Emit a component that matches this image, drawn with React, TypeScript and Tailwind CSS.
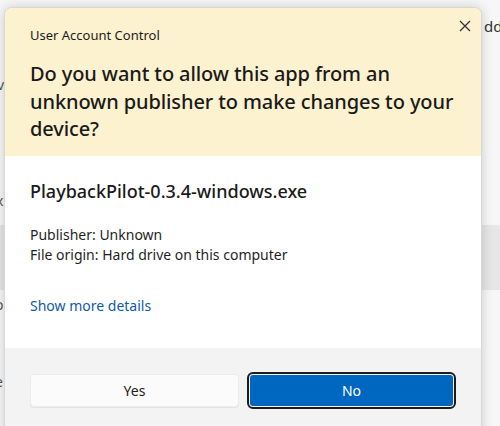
import React from "react";

const font = { fontFamily: '"Noto Sans", "Open Sans", sans-serif' };

export default function App() {
  return (
    <div className="relative w-[500px] h-[426px] overflow-hidden bg-[#f7f7f7]" style={font}>
      {/* background window content */}
      <div className="flex flex-col h-full">
        <div className="h-[225px]"></div>
        <div className="h-[65px] bg-[#e6e6e6]"></div>
        <div className="flex-1"></div>
      </div>
      <div className="absolute left-[484px] top-[15px] text-[15px] text-[#333]">dd</div>
      <div className="absolute left-[-3px] top-[74px] text-[14px] text-[#555]">v</div>
      <div className="absolute left-[-4px] top-[190px] text-[14px] text-[#555]">x</div>
      <div className="absolute left-[-5px] top-[294px] text-[14px] text-[#555]">o</div>
      <div className="absolute left-[-5px] top-[371px] text-[14px] text-[#555]">e</div>

      {/* dialog */}
      <div className="absolute left-[4px] top-[7px] w-[478px] h-[440px] rounded-[8px] overflow-hidden border border-[#d8d8d8] shadow-[0_0_12px_rgba(0,0,0,0.18)] flex flex-col bg-white">
        <div className="relative bg-[#fdf2d0] h-[148px] px-[25px] pt-[18px]">
          <div className="text-[13px] leading-[18px] text-[#1b1b1b]">User Account Control</div>
          <div className="mt-[16px] text-[20px] leading-[27.5px] font-medium text-[#1a1a1a] tracking-[-0.1px]">
            Do you want to allow this app from an<br />unknown publisher to make changes to your<br />device?
          </div>
          <svg className="absolute right-[10px] top-[12px]" width="12" height="12" viewBox="0 0 12 12">
            <path d="M1 1 L11 11 M11 1 L1 11" stroke="#333" strokeWidth="1.3" fill="none" />
          </svg>
        </div>
        <div className="bg-white h-[192px] px-[25px] pt-[22px]">
          <div className="text-[18px] leading-[26px] font-medium text-[#1a1a1a]">PlaybackPilot-0.3.4-windows.exe</div>
          <div className="mt-[21px] text-[14px] leading-[20px] text-[#1f1f1f]">
            <div>Publisher: Unknown</div>
            <div>File origin: Hard drive on this computer</div>
          </div>
          <div className="mt-[31px] text-[14px] leading-[20px] text-[#0f5aa8]">Show more details</div>
        </div>
        <div className="flex-1 bg-[#f3f3f3] px-[25px] pt-[24px] flex gap-[8px]">
          <button className="w-[212px] h-[33px] mt-[2px] rounded-[4px] bg-[#fbfbfb] border border-[#ececec] shadow-[0_1px_0_rgba(0,0,0,0.06)] text-[14px] text-[#1b1b1b]">Yes</button>
          <div className="w-[212px] h-[37px] rounded-[6px] border-2 border-[#1c1c1c] p-[1px]">
            <button className="w-full h-full rounded-[3px] bg-[#0067c0] text-[14px] text-white">No</button>
          </div>
        </div>
      </div>
    </div>
  );
}
